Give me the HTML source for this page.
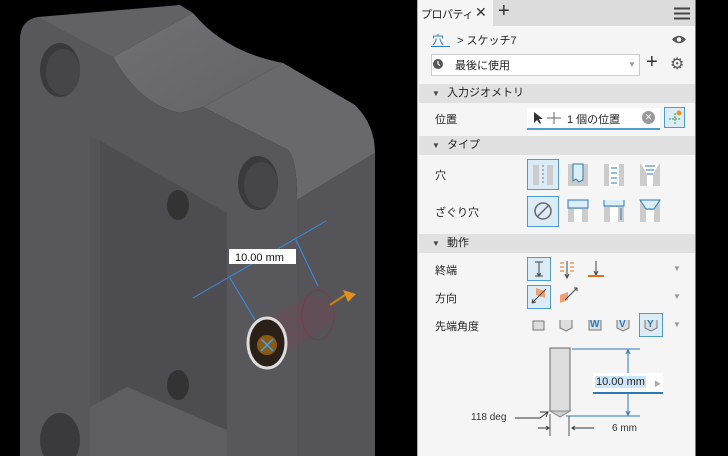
<!DOCTYPE html>
<html><head><meta charset="utf-8"><style>
*{margin:0;padding:0;box-sizing:border-box}
body{width:728px;height:456px;overflow:hidden;background:#000;position:relative;font-family:"Liberation Sans","Noto Sans CJK JP",sans-serif;font-size:11px;color:#222}
.a{position:absolute}
.hdr{position:absolute;left:419px;width:276px;height:19px;background:#e1e1e1;font-size:11px;line-height:19px}
.hdr .tri{position:absolute;left:13px;font-size:8px;color:#444}
.hdr .t{position:absolute;left:28px}
.lbl{position:absolute;left:435px;font-size:11px}
.sel{position:absolute;border:1px solid #4f9cc8;background:#dcecf6}
.dd{position:absolute;left:673px;font-size:8px;color:#999}
</style></head><body>
<svg class="a" style="left:0;top:0" width="417" height="456">
<defs>
<linearGradient id="sd" x1="0" y1="0" x2="1" y2="1"><stop offset="0" stop-color="#717175"/><stop offset="1" stop-color="#636367"/></linearGradient>
</defs>
<rect width="417" height="456" fill="#000"/>
<!-- side face -->
<path d="M297 200 L375 153 L375 456 L297 456 Z" fill="#545459"/>
<!-- top flat strip -->
<path d="M20 40 Q22 20 38 17 L180 5 L193 13 L113 57 Z" fill="#626266"/>
<!-- saddle -->
<path d="M113 57 L193 13 Q225 52 283 63 L203 107 L180 113 Q140 105 113 57 Z" fill="url(#sd)"/>
<!-- right top -->
<path d="M203 107 L283 63 L355 105 Q375 125 375 153 L297 200 Q297 160 288 150 Z" fill="#69696d"/>
<!-- front face -->
<path d="M20 40 Q20 20 38 17 L113 57 Q140 105 180 113 L203 107 L288 150 Q297 160 297 200 L297 456 L20 456 Z" fill="#58585c"/>
<!-- pocket -->
<path d="M90 135 L227 213 L227 456 L90 456 Z" fill="#4d4d51"/>
<path d="M90 135 L100 140 L100 456 L90 456Z" fill="#545458"/>
<path d="M90 407 L127 387 L227 430 L227 456 L90 456Z" fill="#5f5f63"/>
<!-- holes -->
<ellipse cx="60" cy="70" rx="20" ry="27" fill="#3a3a3e"/>
<ellipse cx="63" cy="72" rx="17" ry="23" fill="#46464a"/>
<ellipse cx="258" cy="183" rx="20" ry="27" fill="#3a3a3e"/>
<ellipse cx="261" cy="185" rx="17" ry="23" fill="#46464a"/>
<ellipse cx="60" cy="440" rx="20" ry="27" fill="#3a3a3e"/>
<ellipse cx="178" cy="205" rx="11" ry="15" fill="#333"/>
<ellipse cx="178" cy="385" rx="11" ry="15" fill="#333"/>
<path d="M0 440 L20 430 L20 456 L0 456Z" fill="#000"/>
<!-- preview cylinder -->
<path d="M265 320 L310 295 Q340 300 335 320 L290 350Z" fill="#6a4b55" opacity="0.6"/>
<ellipse cx="318" cy="315" rx="16" ry="25" fill="none" stroke="#7a3a45" stroke-width="0.8"/>
<ellipse cx="267" cy="343" rx="19" ry="25" fill="#2a2018" stroke="#ddd" stroke-width="3"/>
<circle cx="267" cy="345" r="10" fill="#8a5a10"/>
<path d="M261 339 L273 351 M273 339 L261 351" stroke="#3aa0ff" stroke-width="1.5"/>
<path d="M330 305 L348 293" stroke="#d08010" stroke-width="2"/>
<path d="M343 290 L356 294 L348 302Z" fill="#e09020"/>
<!-- dim lines -->
<g stroke="#3a8ee8" stroke-width="1" fill="none">
<path d="M193 298 L326 221"/><path d="M230 278 L255 320"/><path d="M296 240 L318 286"/>
</g>
<rect x="229" y="249" width="67" height="15" fill="#fff"/>
<text x="235" y="261" font-size="11" font-family="Liberation Sans" fill="#111">10.00 mm</text>
</svg>
<!-- panel -->
<div class="a" style="left:417px;top:0;width:279px;height:456px;background:#f5f5f5;border-left:1px solid #aaa;border-right:1px solid #777"></div>
<div class="a" style="left:418px;top:0;width:277px;height:26px;background:#dcdcdc"></div>
<div class="a" style="left:418px;top:0;width:75px;height:26px;background:#f5f5f5"></div>
<div class="a" style="left:421px;top:6px;font-size:11px;letter-spacing:-0.5px">プロパティ</div>
<div class="a" style="left:475px;top:4px;font-size:14px;color:#333">✕</div>
<div class="a" style="left:498px;top:0px;font-size:20px;color:#333">+</div>
<svg class="a" style="left:674px;top:7px" width="17" height="13"><path d="M0 1.5H16M0 6.5H16M0 11.5H16" stroke="#444" stroke-width="2"/></svg>
<div class="a" style="left:432px;top:31px;font-size:12px;color:#2a7ab8">穴</div>
<div class="a" style="left:431px;top:46px;width:19px;height:1px;background:#2a7ab8"></div>
<div class="a" style="left:457px;top:32px;font-size:11px">&gt; スケッチ7</div>
<svg class="a" style="left:671px;top:34px" width="16" height="11"><path d="M1 5.5Q8 -2 15 5.5Q8 13 1 5.5Z" fill="#555"/><circle cx="8" cy="5.5" r="2.3" fill="#f5f5f5"/></svg>
<div class="a" style="left:431px;top:54px;width:209px;height:22px;background:#fff;border:1px solid #ccc"></div>
<svg class="a" style="left:433px;top:59px" width="10" height="10"><circle cx="5" cy="5" r="5" fill="#555"/><path d="M5 2V5L7 6.5" stroke="#fff" stroke-width="1.2" fill="none"/></svg>
<div class="a" style="left:455px;top:57px;font-size:11px">最後に使用</div>
<div class="a" style="left:628px;top:60px;font-size:8px;color:#999">▼</div>
<div class="a" style="left:646px;top:51px;font-size:20px;color:#333">+</div>
<div class="a" style="left:670px;top:54px;font-size:16px;color:#555">⚙</div>
<div class="hdr" style="top:84px"><span class="tri">▼</span><span class="t">入力ジオメトリ</span></div>
<div class="lbl" style="top:111px">位置</div>
<div class="a" style="left:527px;top:108px;width:133px;height:22px;background:#fff;border-bottom:2px solid #4f9cc8"></div>
<svg class="a" style="left:532px;top:111px" width="32" height="14"><path d="M2 1L2 12L5 9L8 13L9 12L7 8L11 8Z" fill="#333"/><path d="M15 7H29M22 1V13" stroke="#666" stroke-width="1"/></svg>
<div class="a" style="left:567px;top:111px;font-size:11px">1 個の位置</div>
<div class="a" style="left:642px;top:111px;width:13px;height:13px;border-radius:50%;background:#999;color:#fff;font-size:9px;line-height:13px;text-align:center">✕</div>
<div class="sel" style="left:664px;top:107px;width:21px;height:21px"></div>
<svg class="a" style="left:666px;top:109px" width="18" height="18"><path d="M3 10H15M9 4V16" stroke="#2a9a3a" stroke-dasharray="2 1"/><circle cx="13" cy="4" r="2.5" fill="#f09020"/></svg>
<div class="hdr" style="top:136px"><span class="tri">▼</span><span class="t">タイプ</span></div>
<div class="lbl" style="top:167px">穴</div>
<div class="lbl" style="top:204px">ざぐり穴</div>
<div class="sel" style="left:527px;top:159px;width:32px;height:31px"></div>
<svg class="a" style="left:527px;top:159px" width="140" height="70">
<g fill="#ccc"><rect x="6" y="6" width="6" height="20"/><rect x="20" y="6" width="6" height="20"/></g>
<path d="M16 6V26" stroke="#777" stroke-dasharray="2 2"/>
<g transform="translate(41,5)"><rect x="0" y="0" width="20" height="22" fill="#ccc"/><path d="M5 0V17L8 15L11 18L15 16V0Z" fill="#dbeefa" stroke="#2a7ab8"/></g>
<g transform="translate(77,5)"><rect x="0" y="0" width="20" height="22" fill="#ccc"/><rect x="5" y="0" width="10" height="22" fill="#fff"/><path d="M7 4H13M7 9H13M7 14H13M7 19H13" stroke="#2a7ab8"/></g>
<g transform="translate(113,5)"><path d="M0 0H20V22H0Z" fill="#ccc"/><path d="M1 0L7 10V22H13V10L19 0Z" fill="#fff"/><path d="M5 2H15M6 6H14M7 10H13" stroke="#2a7ab8"/></g>
</svg>
<div class="sel" style="left:527px;top:196px;width:32px;height:31px"></div>
<svg class="a" style="left:527px;top:196px" width="140" height="34">
<circle cx="16" cy="15" r="8" fill="none" stroke="#666" stroke-width="1.5"/><path d="M10 21L22 9" stroke="#666" stroke-width="1.5"/>
<g transform="translate(41,4)"><rect width="20" height="22" fill="#ccc"/><rect x="0" y="0" width="20" height="8" fill="#dbeefa" stroke="#2a7ab8"/><rect x="6" y="9" width="8" height="13" fill="#fff"/></g>
<g transform="translate(77,4)"><rect width="20" height="22" fill="#ccc"/><path d="M0 0V6H20V0" fill="#dbeefa" stroke="#2a7ab8"/><rect x="6" y="7" width="8" height="15" fill="#fff"/><path d="M17 8V20" stroke="#2a7ab8"/></g>
<g transform="translate(113,4)"><rect width="20" height="22" fill="#ccc"/><path d="M0 0L6 9H14L20 0Z" fill="#dbeefa" stroke="#2a7ab8"/><rect x="6" y="10" width="8" height="12" fill="#fff"/></g>
</svg>
<div class="hdr" style="top:234px"><span class="tri">▼</span><span class="t">動作</span></div>
<div class="lbl" style="top:262px">終端</div>
<div class="lbl" style="top:290px">方向</div>
<div class="lbl" style="top:318px">先端角度</div>
<div class="sel" style="left:527px;top:257px;width:24px;height:24px"></div>
<div class="sel" style="left:527px;top:285px;width:24px;height:24px"></div>
<div class="sel" style="left:639px;top:313px;width:24px;height:24px"></div>
<svg class="a" style="left:527px;top:257px" width="140" height="82">
<path d="M8 5H16M12 5V19M8 19H16M10 16L12 19L14 16" stroke="#444" fill="none"/>
<path d="M33 6H37M33 10H37M33 14H37M43 6H47M43 10H47M43 14H47" stroke="#e07020"/><path d="M40 4V20M38 17L40 21L42 17" stroke="#444" fill="none"/>
<path d="M69 4V17M67 14L69 18L71 14" stroke="#444" fill="none"/><path d="M61 19H77" stroke="#e07020" stroke-width="2"/>
<path d="M9 31L18 34V41L9 38Z" fill="#f0a070"/><path d="M5 46L19 32" stroke="#444"/><path d="M5 46L6 42M5 46L9 45" stroke="#444"/>
<path d="M33 38L41 35V43L33 46Z" fill="#f0a070"/><path d="M38 43L50 31M47 31H50V34" stroke="#444" fill="none"/>
<rect x="6" y="64" width="11" height="9" fill="#ddd" stroke="#777"/>
<path d="M33 63V71L39 74L45 71V63" fill="#ddd" stroke="#777"/>
<path d="M62 63V73H74V63" fill="#ddd" stroke="#777"/>
<path d="M90 63V71L96 74L102 71V63" fill="#ddd" stroke="#777"/>
<path d="M118 63V71L124 74L130 71V63" fill="#ddd" stroke="#777"/>
<text x="63" y="70" font-size="10" font-weight="bold" fill="#2a7ab8" font-family="Liberation Sans">W</text>
<text x="92" y="70" font-size="10" font-weight="bold" fill="#2a7ab8" font-family="Liberation Sans">V</text>
<text x="120" y="70" font-size="10" font-weight="bold" fill="#2a7ab8" font-family="Liberation Sans">Y</text>
</svg>
<div class="dd" style="top:264px">▼</div>
<div class="dd" style="top:292px">▼</div>
<div class="dd" style="top:320px">▼</div>
<svg class="a" style="left:460px;top:344px" width="235" height="100">
<rect x="90" y="4" width="20" height="63" fill="#ddd" stroke="#666"/>
<path d="M90 67L100 73L110 67Z" fill="#ccc" stroke="#888"/>
<path d="M112 5H180M106 72H180" stroke="#2a7ab8"/>
<path d="M168 6V30M168 50V71M166 10L168 6L170 10M166 67L168 71L170 67" stroke="#2a7ab8" fill="none"/>
<path d="M90 70V92M109 72V92" stroke="#555"/>
<path d="M55 74H80L88 68M80 68L88 68L86 73" stroke="#333" fill="none"/>
<path d="M78 84H89M86 82L89 84L86 86M112 84H134M115 82L112 84L115 86" stroke="#333" fill="none"/>
</svg>
<div class="a" style="left:593px;top:373px;width:70px;height:21px;background:#fff;border-bottom:2px solid #2a7ab8"></div>
<div class="a" style="left:595px;top:376px;font-size:11px;background:#cde6f7;padding:0 1px">10.00 mm</div>
<div class="a" style="left:654px;top:379px;font-size:7px;color:#aaa">▶</div>
<div class="a" style="left:471px;top:412px;font-size:10px;color:#333">118 deg</div>
<div class="a" style="left:612px;top:423px;font-size:10px;color:#333">6 mm</div>
</body></html>
